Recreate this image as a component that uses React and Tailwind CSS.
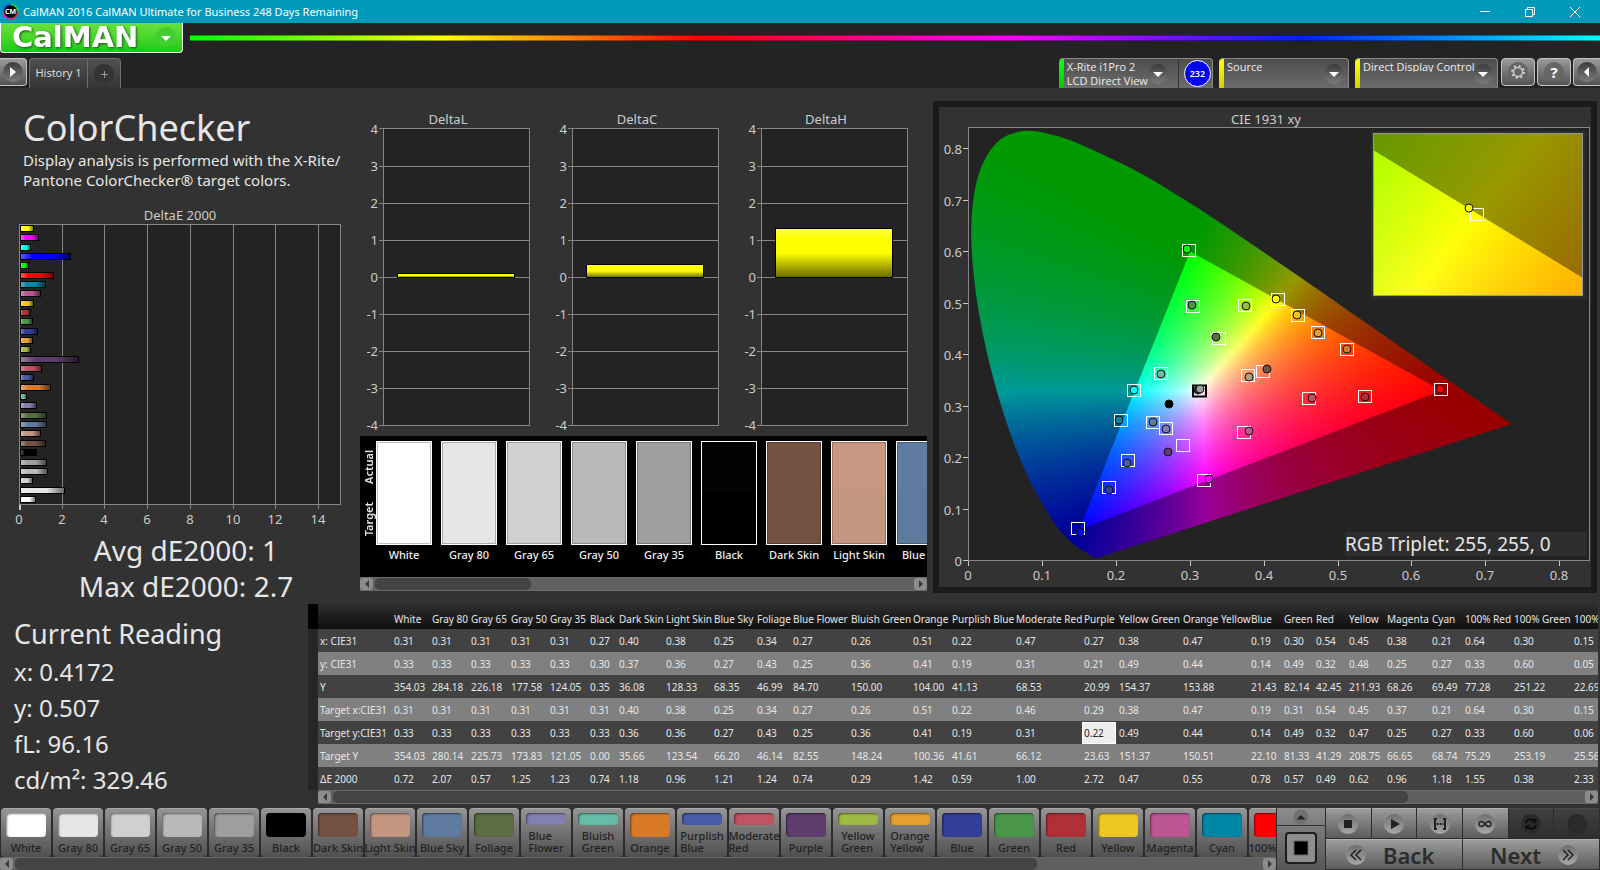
import React, { useMemo } from "react";

const PATCHES = [
  ["White", "#ffffff", 0.72], ["Gray 80", "#e6e6e6", 2.07], ["Gray 65", "#d0d0d0", 0.57],
  ["Gray 50", "#bababa", 1.25], ["Gray 35", "#9e9e9e", 1.23], ["Black", "#000000", 0.74],
  ["Dark Skin", "#735244", 1.18], ["Light Skin", "#c39682", 0.96], ["Blue Sky", "#5e7b9f", 1.21],
  ["Foliage", "#5a6e42", 1.24], ["Blue Flower", "#8380b0", 0.74], ["Bluish Green", "#65bda8", 0.29],
  ["Orange", "#d97a29", 1.42], ["Purplish Blue", "#4a5ba7", 0.59], ["Moderate Red", "#c15462", 1.0],
  ["Purple", "#5d3d6c", 2.72], ["Yellow Green", "#9fba42", 0.47], ["Orange Yellow", "#e6a12e", 0.55],
  ["Blue", "#343e98", 0.78], ["Green", "#4a9649", 0.57], ["Red", "#b03038", 0.49],
  ["Yellow", "#edc824", 0.62], ["Magenta", "#bb5593", 0.96], ["Cyan", "#0086a6", 1.18],
  ["100% Red", "#ff0000", 1.55], ["100% Green", "#00ff00", 0.38], ["100% Blue", "#0000ff", 2.33],
  ["100% Cyan", "#00ffff", 0.45], ["100% Magenta", "#ff00ff", 0.82], ["100% Yellow", "#ffff00", 0.62],
];

const COLUMN_WIDTHS = [38, 39, 40, 39, 40, 29, 47, 48, 43, 36, 58, 62, 39, 64, 68, 35, 64, 68, 33, 32, 33, 38, 45, 33, 49, 60, 60];

const ROWS = [
  ["x: CIE31", "0.31 0.31 0.31 0.31 0.31 0.27 0.40 0.38 0.25 0.34 0.27 0.26 0.51 0.22 0.47 0.27 0.38 0.47 0.19 0.30 0.54 0.45 0.38 0.21 0.64 0.30 0.15"],
  ["y: CIE31", "0.33 0.33 0.33 0.33 0.33 0.30 0.37 0.36 0.27 0.43 0.25 0.36 0.41 0.19 0.31 0.21 0.49 0.44 0.14 0.49 0.32 0.48 0.25 0.27 0.33 0.60 0.05"],
  ["Y", "354.03 284.18 226.18 177.58 124.05 0.35 36.08 128.33 68.35 46.99 84.70 150.00 104.00 41.13 68.53 20.99 154.37 153.88 21.43 82.14 42.45 211.93 68.26 69.49 77.28 251.22 22.69"],
  ["Target x:CIE31", "0.31 0.31 0.31 0.31 0.31 0.31 0.40 0.38 0.25 0.34 0.27 0.26 0.51 0.22 0.46 0.29 0.38 0.47 0.19 0.31 0.54 0.45 0.37 0.21 0.64 0.30 0.15"],
  ["Target y:CIE31", "0.33 0.33 0.33 0.33 0.33 0.33 0.36 0.36 0.27 0.43 0.25 0.36 0.41 0.19 0.31 0.22 0.49 0.44 0.14 0.49 0.32 0.47 0.25 0.27 0.33 0.60 0.06"],
  ["Target Y", "354.03 280.14 225.73 173.83 121.05 0.00 35.66 123.54 66.20 46.14 82.55 148.24 100.36 41.61 66.12 23.63 151.37 150.51 22.10 81.33 41.29 208.75 66.65 68.74 75.29 253.19 25.56"],
  ["ΔE 2000", "0.72 2.07 0.57 1.25 1.23 0.74 1.18 0.96 1.21 1.24 0.74 0.29 1.42 0.59 1.00 2.72 0.47 0.55 0.78 0.57 0.49 0.62 0.96 1.18 1.55 0.38 2.33"],
];

/* ---------- title bar and header ---------- */

function TitleBar() {
  return (
    <div className="flex h-[23px] items-center bg-[#0099bc] pl-[2px] text-white">
      <svg width="17" height="17" viewBox="0 0 17 17" className="shrink-0" aria-hidden="true">
        <circle cx="8.500" cy="8.500" r="7" fill="none" stroke="#e22" strokeWidth="2" strokeDasharray="11 33" />
        <circle cx="8.500" cy="8.500" r="7" fill="none" stroke="#d2b" strokeWidth="2" strokeDasharray="11 33" strokeDashoffset="-11" />
        <circle cx="8.500" cy="8.500" r="7" fill="none" stroke="#25e" strokeWidth="2" strokeDasharray="11 33" strokeDashoffset="-22" />
        <circle cx="8.500" cy="8.500" r="7" fill="none" stroke="#3c3" strokeWidth="2" strokeDasharray="11 33" strokeDashoffset="-33" />
        <circle cx="8.500" cy="8.500" r="6.300" fill="#000" />
        <text x="8.500" y="11" textAnchor="middle" fontSize="7" fontWeight="700" fill="#fff">CM</text>
      </svg>
      <h1 className="ml-1 flex-1 text-[11px] leading-none">CalMAN 2016 CalMAN Ultimate for Business 248 Days Remaining</h1>
      <div className="flex items-center gap-[33px] pr-[19px]">
        <button aria-label="Minimize" className="flex h-5 w-3 items-center justify-center">
          <svg width="12" height="12" viewBox="0 0 12 12"><path d="M1 5.500h10" stroke="#fff" /></svg>
        </button>
        <button aria-label="Restore" className="flex h-5 w-3 items-center justify-center">
          <svg width="12" height="12" viewBox="0 0 12 12" fill="none" stroke="#fff"><path d="M1.500 3.500h7v7h-7zM3.500 3.500v-2h7v7h-2" /></svg>
        </button>
        <button aria-label="Close" className="flex h-5 w-3 items-center justify-center">
          <svg width="12" height="12" viewBox="0 0 12 12"><path d="M1 1l10 10M11 1L1 11" stroke="#fff" /></svg>
        </button>
      </div>
    </div>
  );
}

function RoundArrow({ d = "M5 8h10l-5 5z" }) {
  return (
    <svg width="20" height="20" viewBox="0 0 20 20" className="shrink-0" aria-hidden="true">
      <defs>
        <linearGradient id="knob" x1="0" y1="0" x2="0" y2="1">
          <stop offset="0" stopColor="#3c3c3c" /><stop offset="1" stopColor="#7c7c7c" />
        </linearGradient>
      </defs>
      <circle cx="10" cy="10" r="10" fill="url(#knob)" />
      <path d={d} fill="#fff" />
    </svg>
  );
}

function SelectTab({ label, width }) {
  return (
    <div className={"relative flex h-[30px] rounded-t-[4px] border-t border-r border-[#8a8a8a] bg-linear-to-b from-[#4e4e4e] to-[#6c6c6c] " + width}>
      <span className="w-[5px] rounded-tl-[4px] bg-linear-to-b from-[#ffff00] to-[#d8d000]" />
      <span className="pointer-events-none absolute right-[4px] top-[5px]"><RoundArrow /></span>
      <select aria-label={label} className="relative z-10 h-full flex-1 appearance-none bg-transparent pb-[15px] pl-[3px] font-['Open_Sans',sans-serif] text-[11px] leading-none text-[#eeeeee]">
        <option>{label}</option>
      </select>
    </div>
  );
}

const HEADER_BUTTON = "flex h-[28px] w-[34px] items-center justify-center rounded-[4px] border border-[#c4c4c4] bg-linear-to-b from-[#9a9a9a] to-[#545454]";

function Header() {
  return (
    <header className="bg-[#232323]">
      <div className="flex h-[35px] items-start">
        <button aria-label="CalMAN menu" className="h-[30px] w-[183px] rounded-b-[4px] border-x border-b border-white bg-linear-to-b from-[#67e03c] to-[#0ccc12]">
          <svg width="181" height="29" viewBox="0 0 181 29" className="overflow-visible">
            <text x="11" y="24" className="drop-shadow-[1px_1px_1px_#205020]" fontFamily="'DejaVu Sans', sans-serif" fontWeight="700" fontSize="29" fill="#fff">CalMAN</text>
            <circle cx="165" cy="14" r="10" fill="#3fcf2e" />
            <path d="M160 13h10l-5 5z" fill="#fff" />
          </svg>
        </button>
        <div className="ml-[7px] mt-3 h-[6px] flex-1 border-y border-black/40 bg-[linear-gradient(90deg,#00ff00,#ffff00_18%,#ff0000_36%,#ff00ff_58%,#0020ff_79%,#00ffff)]" />
      </div>
      <div className="flex h-[30px] items-start">
        <button aria-label="Show panel" className="flex h-[28px] w-[27px] items-center justify-center rounded-r-[4px] border-y border-r border-[#c4c4c4] bg-linear-to-b from-[#9a9a9a] to-[#545454]">
          <RoundArrow d="M7 5l6 5-6 5z" />
        </button>
        <div className="ml-[2px] flex h-[30px] rounded-t-[4px] border-x border-t border-[#707070] bg-linear-to-b from-[#505050] to-[#343434]">
          <button className="w-[58px] border-r border-[#707070] text-[11px] text-[#dddddd]">History 1</button>
          <button aria-label="Add tab" className="flex w-[32px] items-center justify-center">
            <svg width="20" height="20" viewBox="0 0 20 20"><circle cx="10" cy="10" r="10" fill="#333" /><path d="M7 10.500h7M10.500 7v7" stroke="#999" /></svg>
          </button>
        </div>
        <div className="flex-1" />
        <div className="flex h-[30px] w-[154px] rounded-t-[4px] border-t border-r border-[#8a8a8a] bg-linear-to-b from-[#4e4e4e] to-[#6c6c6c]">
          <span className="w-[5px] rounded-tl-[4px] bg-linear-to-b from-[#10ff10] to-[#00cc00]" />
          <button aria-haspopup="menu" className="flex flex-1 items-center justify-between whitespace-nowrap pl-[3px] pr-[10px] text-left font-['Open_Sans',sans-serif] text-[11px] leading-[14px] text-[#eeeeee]">
            <span>X-Rite i1Pro 2<br />LCD Direct View</span>
            <RoundArrow />
          </button>
          <span className="flex w-[35px] items-center justify-center border-l border-[#333333] pl-1">
            <span className="flex size-[27px] items-center justify-center rounded-full border border-white bg-[#0000f4] text-[9px] font-semibold text-white">232</span>
          </span>
        </div>
        <div className="w-[6px]" />
        <SelectTab label="Source" width="w-[130px]" />
        <div className="w-[6px]" />
        <SelectTab label="Direct Display Control" width="w-[143px]" />
        <div className="flex gap-[2px] pl-[3px]">
          <button aria-label="Settings" className={HEADER_BUTTON}>
            <svg width="20" height="20" viewBox="0 0 20 20">
              <circle cx="10" cy="10" r="10" fill="#666" />
              <circle cx="10" cy="10" r="4.500" fill="none" stroke="#ccc" strokeWidth="1.500" />
              <circle cx="10" cy="10" r="6" fill="none" stroke="#ccc" strokeWidth="2" strokeDasharray="2 2.712" />
            </svg>
          </button>
          <button aria-label="Help" className={HEADER_BUTTON}>
            <span className="flex size-5 items-center justify-center rounded-full bg-[#666666] text-[15px] font-bold leading-none text-white">?</span>
          </button>
          <button aria-label="Collapse panel" className="flex h-[28px] w-[27px] items-center justify-center rounded-l-[4px] border-y border-l border-[#c4c4c4] bg-linear-to-b from-[#9a9a9a] to-[#545454]">
            <RoundArrow d="M12 5l-5 5 5 5z" />
          </button>
        </div>
      </div>
    </header>
  );
}

/* ---------- bar charts ---------- */

const LINE = "#868686";
const LABEL = "#cccccc";

function DeltaEChart() {
  const bars = [...PATCHES].reverse();
  const ticks = [0, 2, 4, 6, 8, 10, 12, 14];
  const px = (v) => Math.round(19 + v * 21.35);
  return (
    <svg viewBox="0 0 342 330" className="block h-auto w-full" fontSize="13" fill={LABEL}>
      <defs>
        <linearGradient id="sheen" x1="0" x2="1" y1="0" y2="0">
          <stop offset="0" stopColor="#fff" stopOpacity="0.35" />
          <stop offset="0.25" stopColor="#fff" stopOpacity="0" />
          <stop offset="0.6" stopColor="#000" stopOpacity="0" />
          <stop offset="1" stopColor="#000" stopOpacity="0.55" />
        </linearGradient>
      </defs>
      <text x="180" y="20" textAnchor="middle">DeltaE 2000</text>
      <rect x="19" y="24" width="322" height="281" fill="#232323" />
      {ticks.slice(1).map((t) => <rect key={t} x={px(t)} y="24" width="1" height="285" fill={LINE} />)}
      <rect x="19.500" y="24.500" width="321" height="280" fill="none" stroke={LINE} />
      <rect x="19" y="305" width="2" height="5" fill={LABEL} />
      {bars.map(([name, color, v], i) => {
        const y = Math.round(26 + i * 9.34);
        const w = Math.round(v * 21.35);
        return (
          <g key={name}>
            <rect x="20" y={y - 1} width={w + 1} height="7" fill="#000" />
            <rect x="21" y={y} width={w - 1} height="5" fill={color} />
            <rect x="21" y={y} width={w - 1} height="5" fill="url(#sheen)" />
          </g>
        );
      })}
      {ticks.map((t) => <text key={t} x={px(t)} y="324" textAnchor="middle">{t}</text>)}
    </svg>
  );
}

function DeltaChart({ title, value }) {
  const y = (v) => Math.round(177 - v * 37.1);
  return (
    <svg viewBox="0 0 189 336" className="block h-auto w-full" fontSize="13" fill={LABEL}>
      <defs>
        <linearGradient id="yellowBar" x1="0" x2="0" y1="0" y2="1">
          <stop offset="0" stopColor="#ffff55" /><stop offset="0.2" stopColor="#ffff00" />
          <stop offset="0.5" stopColor="#ffff00" /><stop offset="1" stopColor="#6a6a00" />
        </linearGradient>
      </defs>
      <text x="106" y="24" textAnchor="middle">{title}</text>
      <rect x="41" y="28" width="147" height="298" fill="#232323" />
      {[4, 3, 2, 1, 0, -1, -2, -3, -4].map((t) => (
        <g key={t}>
          <rect x="37" y={t === 4 ? 28 : y(t)} width="151" height="1" fill={LINE} />
          <text x="36" y={y(t) + 5} textAnchor="end">{t}</text>
        </g>
      ))}
      <rect x="41.500" y="28.500" width="146" height="297" fill="none" stroke={LINE} />
      <rect x="55.500" y={y(value) + 0.5} width="117" height={177 - y(value)} fill="url(#yellowBar)" stroke="#000" />
    </svg>
  );
}

/* ---------- CIE 1931 diagram ---------- */

const LOCUS = [
  [0.1741, 0.005], [0.1733, 0.0048], [0.1714, 0.0051], [0.1689, 0.0069], [0.1644, 0.0109], [0.1566, 0.0177],
  [0.144, 0.0297], [0.1241, 0.0578], [0.1096, 0.0868], [0.0913, 0.1327], [0.0687, 0.2007], [0.0454, 0.295],
  [0.0235, 0.4127], [0.0082, 0.5384], [0.0039, 0.6548], [0.0139, 0.7502], [0.0389, 0.812], [0.0743, 0.8338],
  [0.1142, 0.8262], [0.1547, 0.8059], [0.2296, 0.7543], [0.3016, 0.6923], [0.3731, 0.6245], [0.4441, 0.5547],
  [0.5125, 0.4866], [0.5752, 0.4242], [0.627, 0.3725], [0.6658, 0.334], [0.6915, 0.3083], [0.719, 0.2809], [0.7347, 0.2653],
];
const GAMUT = [[0.64, 0.33], [0.3, 0.6], [0.15, 0.06]];

function chroma(x, y, gain) {
  const z = 1 - x - y;
  const rgb = [
    3.2406 * x - 1.5372 * y - 0.4986 * z,
    -0.9689 * x + 1.8758 * y + 0.0415 * z,
    0.0557 * x - 0.204 * y + 1.057 * z,
  ].map((c) => Math.max(0, c));
  const top = Math.max(...rgb);
  return "rgb(" + rgb.map((c) => Math.round((c / top) * 255 * gain)).join(",") + ")";
}

function smoothPath(points) {
  let d = "M" + points[0].join(" ");
  for (let i = 0; i < points.length - 1; i++) {
    const p0 = points[Math.max(0, i - 1)];
    const p1 = points[i];
    const p2 = points[i + 1];
    const p3 = points[Math.min(points.length - 1, i + 2)];
    const c = [p1[0] + (p2[0] - p0[0]) / 6, p1[1] + (p2[1] - p0[1]) / 6, p2[0] - (p3[0] - p1[0]) / 6, p2[1] - (p3[1] - p1[1]) / 6];
    d += "C" + c.map((n) => n.toFixed(1)).join(" ") + " " + p2.map((n) => n.toFixed(1)).join(" ");
  }
  return d + "Z";
}

/* Fills a rectangle with the chromaticity field, one thin gradient strip after another. */
function Field({ id, left, top, right, bottom, rowHeight, step, toXY, gain }) {
  const strips = useMemo(() => {
    const out = [];
    const n = Math.round((right - left) / step);
    for (let y = top; y < bottom; y += rowHeight) {
      const stops = [];
      for (let i = 0; i <= n; i++) {
        const [cx, cy] = toXY(left + ((right - left) * i) / n, y + rowHeight / 2);
        stops.push(chroma(cx, cy, gain));
      }
      out.push([y, stops]);
    }
    return out;
  }, []);
  return (
    <g shapeRendering="crispEdges">
      {strips.map(([y, stops]) => (
        <g key={y}>
          <linearGradient id={id + y} x1="0" x2="1" y1="0" y2="0">
            {stops.map((c, i) => <stop key={i} offset={i / (stops.length - 1)} stopColor={c} />)}
          </linearGradient>
          <rect x={left} y={y} width={right - left} height={Math.min(rowHeight, bottom - y)} fill={"url(#" + id + y + ")"} />
        </g>
      ))}
    </g>
  );
}

const TARGETS = [
  [250, 144], [254, 200], [306, 199], [280, 232], [222, 267], [195, 284], [182, 314], [214, 316], [227, 322], [244, 339],
  [189, 354], [170, 381], [139, 422], [265, 374], [309, 269], [324, 265], [305, 326], [339, 193], [359, 209], [379, 226],
  [408, 243], [502, 283], [426, 290], [370, 292],
];
const READINGS = [
  [248, 142, "#00ff00"], [253, 198, "#4a9649"], [307, 199, "#9fba42"], [277, 230, "#5a6e42"], [222, 267, "#65bda8"],
  [195, 283, "#00ffff"], [180, 313, "#0086a6"], [214, 315, "#5e7b9f"], [227, 322, "#8380b0"], [229, 345, "#5d3d6c"],
  [188, 356, "#4a5ba7"], [170, 383, "#343e98"], [141, 425, "#0000ff"], [270, 372, "#ff00ff"], [310, 270, "#c39682"],
  [328, 262, "#735244"], [310, 324, "#bb5593"], [230, 297, "#000000"], [259, 283, "#333333"], [261, 282, "#9e9e9e"], [337, 192, "#ffff00"],
  [358, 208, "#edc824"], [379, 226, "#e6a12e"], [408, 242, "#d97a29"], [501, 282, "#ff0000"], [426, 290, "#b03038"],
  [373, 291, "#c15462"],
];

function Diagram() {
  const X0 = 29.5;
  const Y0 = 453.5;
  const map = ([x, y]) => [X0 + x * 739, Y0 - y * 515];
  const unmap = (px, py) => [(px - X0) / 739, (Y0 - py) / 515];
  const locus = smoothPath(LOCUS.map(map));
  const gamut = GAMUT.map(map).map((p) => p.join(",")).join(" ");
  const insetXY = (px, py) => [0.4193 + (px - 538) / 3820, 0.5053 - (py - 106) / 2930];
  const ticks = [0, 1, 2, 3, 4, 5, 6, 7, 8];
  return (
    <svg viewBox="0 0 652 480" className="block h-auto w-full" fontSize="13" fill={LABEL}>
      <defs>
        <clipPath id="locusClip"><path d={locus} /></clipPath>
        <clipPath id="gamutClip"><polygon points={gamut} /></clipPath>
        <clipPath id="insetGamut"><polygon points="434,43 644,171 644,189 434,189" /></clipPath>
      </defs>
      <text x="327" y="17" textAnchor="middle">CIE 1931 xy</text>
      <rect x="29" y="20" width="621" height="434" fill="#232323" />
      <g clipPath="url(#locusClip)">
        <Field id="o" left={30} top={22} right={574} bottom={454} rowHeight={2} step={12} toXY={unmap} gain={0.6} />
      </g>
      <g clipPath="url(#gamutClip)">
        <Field id="g" left={138} top={143} right={504} bottom={425} rowHeight={2} step={7} toXY={unmap} gain={1} />
      </g>
      <rect x="29.500" y="20.500" width="621" height="433" fill="none" stroke={LINE} />
      {ticks.map((t) => {
        const x = Math.round(29 + t * 73.9);
        const y = Math.round(453 - t * 51.5);
        const text = t === 0 ? "0" : "0." + t;
        return (
          <g key={t}>
            <rect x={x} y="454" width="1" height="5" fill={LABEL} />
            <text x={x} y="473" textAnchor="middle">{text}</text>
            <rect x="24" y={y} width="5" height="1" fill={LABEL} />
            <text x="23" y={y + 6} textAnchor="end">{text}</text>
          </g>
        );
      })}
      {TARGETS.map(([x, y]) => <rect key={x + "-" + y} x={x - 6.5} y={y - 6.5} width="13" height="12" fill="none" stroke="#fff" />)}
      <rect x="254" y="278.500" width="13" height="11" fill="none" stroke="#000" strokeWidth="2" />
      {READINGS.map(([x, y, c]) => <circle key={x + "-" + y} cx={x} cy={y} r="4" fill={c} stroke="#111" />)}

      <rect x="432" y="24" width="215" height="168" fill="#2d2d2d" />
      <Field id="i" left={434} top={26} right={644} bottom={189} rowHeight={2} step={7} toXY={insetXY} gain={0.6} />
      <g clipPath="url(#insetGamut)">
        <Field id="j" left={434} top={42} right={644} bottom={189} rowHeight={2} step={7} toXY={insetXY} gain={1} />
      </g>
      <rect x="434.500" y="26.500" width="209" height="162" fill="none" stroke="#999" />
      <rect x="531.500" y="101.500" width="13" height="12" fill="none" stroke="#fff" />
      <circle cx="530" cy="101" r="4" fill="#ffff00" stroke="#111" />

      <rect x="406" y="425" width="241" height="24" fill="#2e2e2e" />
      <text x="406" y="444" fontSize="19" fill="#e6e6e6">RGB Triplet: 255, 255, 0</text>
    </svg>
  );
}

/* ---------- swatches, table, bottom bar ---------- */

function ScrollBar({ thumb, label }) {
  const arrow = "flex h-3 w-[13px] shrink-0 items-center justify-center rounded-[3px] bg-[#8c8c8c]";
  return (
    <div className="flex h-[14px] items-center border-y border-[#6a6a6a] bg-[#606060]">
      <button aria-label={label + " left"} className={arrow}><svg width="6" height="8"><path d="M5 0v8L1 4z" fill="#3a3a3a" /></svg></button>
      <div className="mx-[2px] h-3 flex-1"><div className={"h-3 rounded-[5px] bg-[#444444] " + thumb} /></div>
      <button aria-label={label + " right"} className={arrow}><svg width="6" height="8"><path d="M1 0v8l4-4z" fill="#3a3a3a" /></svg></button>
    </div>
  );
}

function SwatchStrip() {
  const actual = ["#ffffff", "#e4e6e5", "#d1d0ce", "#bbbab8", "#9f9f9d", "#020305", "#745342", "#c79783", "#5f7ca0"];
  return (
    <section className="ml-[18px] bg-black">
      <div className="flex h-[141px] overflow-hidden pt-[5px]">
        <div className="flex h-[104px] w-[16px] shrink-0 flex-col items-center justify-around text-[11px] font-semibold leading-none text-[#e6e6e6]">
          <span className="rotate-180 [writing-mode:vertical-rl]">Actual</span>
          <span className="rotate-180 [writing-mode:vertical-rl]">Target</span>
        </div>
        {PATCHES.slice(0, 9).map(([name, color], i) => (
          <figure key={name} className="mr-[9px] w-[56px] shrink-0">
            <svg viewBox="0 0 56 104" className="block w-[56px]">
              <rect width="56" height="104" fill={actual[i]} />
              <rect y="52" width="56" height="52" fill={color} />
              <rect x="1.500" y="1.500" width="53" height="101" fill="none" stroke="#000" strokeOpacity="0.250" />
              <rect x="0.500" y="0.500" width="55" height="103" fill="none" stroke="#fff" />
            </svg>
            <figcaption className="mt-[3px] flex justify-center whitespace-nowrap text-[11px] font-medium leading-[14px] text-[#eeeeee]">{name}</figcaption>
          </figure>
        ))}
      </div>
      <ScrollBar thumb="w-[29%]" label="Scroll swatches" />
    </section>
  );
}

function DataTable() {
  return (
    <section className="min-w-0 pr-[2px]">
      <div className="overflow-hidden">
        <table className="w-[1324px] table-fixed border-collapse text-left text-[10px] text-[#e6e6e6]">
          <colgroup>
            <col className="w-[10px]" />
            <col className="w-[74px]" />
            {COLUMN_WIDTHS.map((w, i) => <col key={i} style={{ width: w }} />)}
          </colgroup>
          <thead>
            <tr className="h-[25px] bg-linear-to-b from-[#2f2f2f] to-[#101010]">
              <th className="bg-black p-0" aria-label="Row marker" />
              <th className="p-0" aria-label="Measure" />
              {COLUMN_WIDTHS.map((w, i) => <th key={i} scope="col" className="whitespace-nowrap p-0 pl-[2px] pt-1 font-normal leading-4">{PATCHES[i][0]}</th>)}
            </tr>
          </thead>
          <tbody>
            {ROWS.map(([label, values], r) => (
              <tr key={label} className={"h-[23px] " + (r % 2 ? "bg-[#808080]" : "bg-[#424242]")}>
                <td className="bg-[#262626] p-0" />
                <th scope="row" className="whitespace-nowrap p-0 pl-[2px] font-normal leading-4">{label}</th>
                {values.split(" ").map((v, c) => (
                  <td key={c} className="p-0 leading-4">
                    {r === 4 && c === 15 ? (
                      <input aria-label="Target y for Purple" defaultValue={v} className="block h-[22px] w-[34px] border border-white bg-[#eeeeee] pl-px text-[#222222]" />
                    ) : (
                      <span className="pl-[2px]">{v}</span>
                    )}
                  </td>
                ))}
              </tr>
            ))}
          </tbody>
        </table>
      </div>
      <div className="ml-[10px]"><ScrollBar thumb="w-[86%]" label="Scroll table" /></div>
    </section>
  );
}

function PatchButton({ name, color }) {
  const words = name.split(" ");
  const tall = !["Blue Flower", "Bluish Green", "Purplish Blue", "Moderate Red", "Yellow Green", "Orange Yellow"].includes(name);
  return (
    <button className="flex h-[49px] w-[50px] shrink-0 flex-col items-center justify-between rounded-[4px] border-t border-[#a8a8a8] bg-linear-to-b from-[#949494] to-[#505050] pb-[3px] pt-1 text-[11px] leading-3 text-[#222222]">
      <span
        className={"w-10 rounded-[4px] shadow-[inset_1px_1px_2px_rgba(0,0,0,0.5)] " + (tall ? "h-6" : "h-3")}
        style={{ backgroundColor: color }}
      />
      {tall ? <span className="flex justify-center whitespace-nowrap font-medium">{name}</span> : <span className="text-left font-medium">{words[0]}<br />{words[1]}</span>}
    </button>
  );
}

const KEY = "flex h-[30px] items-center justify-center border-t border-[#b0b0b0] bg-linear-to-b from-[#9c9c9c] to-[#5c5c5c]";
const KEY_OFF = "flex h-[30px] items-center justify-center border-t border-[#4a4a4a] bg-linear-to-b from-[#404040] to-[#2e2e2e]";
const KEY_WIDE = "col-span-3 flex h-[30px] items-center gap-[17px] border-t border-[#b0b0b0] bg-linear-to-b from-[#9c9c9c] to-[#5c5c5c] text-[22px] font-semibold leading-none text-[#2c2c2c]";

function Knob({ children, off }) {
  return (
    <svg width="20" height="20" viewBox="0 0 20 20" className="shrink-0" fill="none" stroke="#222" aria-hidden="true">
      <defs>
        <linearGradient id="lightKnob" x1="0" y1="0" x2="0" y2="1"><stop offset="0" stopColor="#6e6e6e" /><stop offset="1" stopColor="#a8a8a8" /></linearGradient>
      </defs>
      <circle cx="10" cy="10" r="10" stroke="none" fill={off ? "#2a2a2a" : "url(#lightKnob)"} />
      {children}
    </svg>
  );
}

function BottomBar() {
  return (
    <footer className="flex h-[62px] overflow-hidden bg-[#2c2c2c]">
      <div className="flex min-w-0 flex-1 flex-col">
        <div className="flex shrink-0 gap-[2px] overflow-hidden pl-px">
          {PATCHES.slice(0, 25).map(([name, color]) => <PatchButton key={name} name={name} color={color} />)}
        </div>
        <ScrollBar thumb="w-[82%]" label="Scroll patches" />
      </div>
      <div className="ml-px flex w-12 flex-col bg-linear-to-b from-[#8c8c8c] to-[#565656]">
        <button aria-label="Expand" className="flex h-[18px] items-center justify-center border-b border-[#333333]">
          <svg width="16" height="16" viewBox="0 0 16 16"><circle cx="8" cy="8" r="7.500" fill="#707070" /><path d="M3.500 10.500L8 6l4.500 4.500z" fill="#222" /></svg>
        </button>
        <button aria-label="Pattern window" className="flex flex-1 items-center justify-center">
          <svg width="32" height="32" viewBox="0 0 32 32">
            <rect x="1" y="1" width="30" height="30" rx="3" fill="#8e8e8e" stroke="#1c1c1c" strokeWidth="2" />
            <rect x="9" y="9" width="14" height="14" fill="#000" stroke="#666" />
          </svg>
        </button>
      </div>
      <div className="ml-px grid w-[274px] grid-cols-6 content-start gap-px pr-px">
        <button aria-label="Stop" className={KEY}><Knob><path d="M6 6h8v8H6z" fill="#222" stroke="none" /></Knob></button>
        <button aria-label="Play" className={KEY}><Knob><path d="M7 5l9 5-9 5z" fill="#222" stroke="none" /></Knob></button>
        <button aria-label="Read series" className={KEY}>
          <Knob><path d="M7 5H5v10h2M13 5h2v10h-2" strokeWidth="2" /><path d="M6.500 10h7" strokeWidth="2" strokeDasharray="2 1" /></Knob>
        </button>
        <button aria-label="Continuous" className={KEY}><Knob><path d="M10 10C8 7 4 6.500 4 10s4 3 6 0 6-3.500 6 0-4 3-6 0z" strokeWidth="1.500" /></Knob></button>
        <button aria-label="Refresh" disabled className={KEY_OFF}><Knob off><path d="M5 9c.5-4 6-5 8.500-2M15 11c-.5 4-6 5-8.500 2" stroke="#0c0c0c" strokeWidth="2" /><path d="M15.500 3.500v5h-5zM4.500 16.500v-5h5z" fill="#0c0c0c" stroke="none" /></Knob></button>
        <button aria-label="Record" disabled className={KEY_OFF}><Knob off /></button>
        <button className={KEY_WIDE + " pl-5"}>
          <Knob><path d="M10 5l-5 5 5 5M15 5l-5 5 5 5" strokeWidth="1.500" /></Knob>Back
        </button>
        <button className={KEY_WIDE + " pl-[27px]"}>
          Next<Knob><path d="M5 5l5 5-5 5M10 5l5 5-5 5" strokeWidth="1.500" /></Knob>
        </button>
      </div>
    </footer>
  );
}

export default function App() {
  return (
    <div className="flex min-h-screen flex-col bg-[#323232] font-['Noto_Sans',sans-serif] text-[#e6e6e6]">
      <TitleBar />
      <Header />
      <main className="flex-1">
        <div className="grid grid-cols-[minmax(0,342fr)_minmax(0,585fr)_minmax(0,673fr)] items-start">
          <section className="pt-[18px]">
            <h2 className="pl-[23px] text-[36px] leading-[44px]">ColorChecker</h2>
            <p className="whitespace-nowrap pl-[23px] text-[15px] leading-5">
              Display analysis is performed with the X-Rite/<br />Pantone ColorChecker® target colors.
            </p>
            <div className="mt-[10px]"><DeltaEChart /></div>
            <div className="mt-[2px] pl-[30px] text-center text-[28px] leading-9">
              <p>Avg dE2000: 1</p>
              <p>Max dE2000: 2.7</p>
            </div>
          </section>
          <section className="pt-3">
            <div className="mr-[18px] grid grid-cols-3">
              <DeltaChart title="DeltaL" value={0.1} />
              <DeltaChart title="DeltaC" value={0.35} />
              <DeltaChart title="DeltaH" value={1.32} />
            </div>
            <SwatchStrip />
          </section>
          <section className="ml-[6px] mr-[3px] mt-[13px] border-6 border-[#1b1b1b]">
            <Diagram />
          </section>
        </div>
        <div className="grid grid-cols-[308px_minmax(0,1fr)] items-start">
          <section className="pl-[14px] pt-[10px]">
            <h2 className="text-[27px] leading-[40px]">Current Reading</h2>
            <ul className="text-[24px] leading-9">
              <li>x: 0.4172</li>
              <li>y: 0.507</li>
              <li>fL: 96.16</li>
              <li>cd/m²: 329.46</li>
            </ul>
          </section>
          <DataTable />
        </div>
      </main>
      <BottomBar />
    </div>
  );
}
